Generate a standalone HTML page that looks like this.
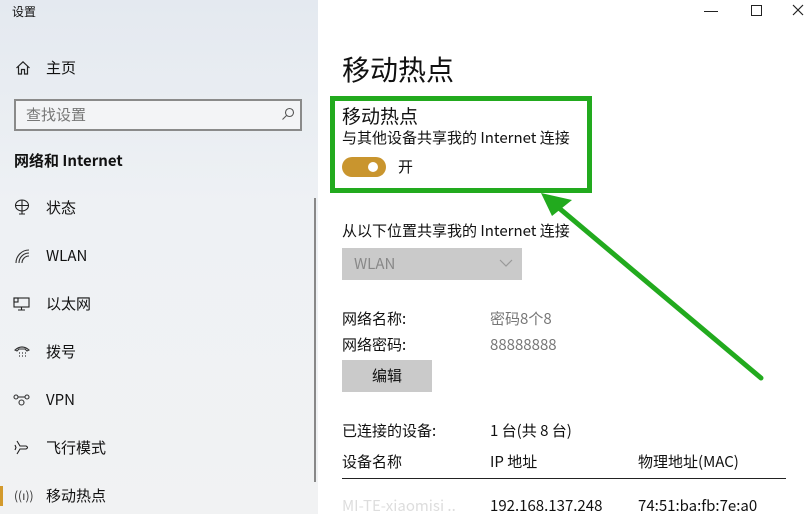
<!DOCTYPE html>
<html><head><meta charset="utf-8"><style>
*{margin:0;padding:0;box-sizing:border-box}
body{width:812px;height:514px;overflow:hidden;position:relative;background:#fff;font-family:"Noto Sans CJK SC","Liberation Sans",sans-serif;color:#111}
.side{position:absolute;left:0;top:0;width:318px;height:514px;background:linear-gradient(180deg,#e4e9f0 0%,#eef1f4 40%,#f1f2f3 100%)}
.t{position:absolute;white-space:nowrap;line-height:20px}
.nav{position:absolute;left:46px;font-size:15px;line-height:20px;white-space:nowrap}
</style></head><body>
<div class="side">
<div class="t" style="left:12px;top:2px;font-size:12px">设置</div>
<svg style="position:absolute;left:15px;top:60px" width="16" height="16" viewBox="0 0 16 16" fill="none" stroke="#222" stroke-width="1.2"><path d="M1.5 8 L8 1.8 L14.5 8 M3.5 6.5 V14 H6.5 V9.5 H9.5 V14 H12.5 V6.5"/></svg>
<div class="nav" style="top:58px">主页</div>
<div style="position:absolute;left:14px;top:99px;width:288px;height:32px;border:2px solid #8a8a8a;background:#f3f4f6"></div>
<div class="t" style="left:26px;top:105px;font-size:15px;color:#777">查找设置</div>
<svg style="position:absolute;left:281px;top:107px" width="14" height="14" viewBox="0 0 14 14" fill="none" stroke="#555" stroke-width="1.1"><circle cx="8.5" cy="5.5" r="4"/><path d="M5.5 8.5 L1.5 12.5"/></svg>
<div class="t" style="left:14px;top:151px;font-size:15px;font-weight:bold">网络和 Internet</div>
<svg style="position:absolute;left:14px;top:199px" width="16" height="16" viewBox="0 0 16 16" fill="none" stroke="#222" stroke-width="1.1"><ellipse cx="8" cy="6.5" rx="6.5" ry="5.5"/><path d="M1.5 6.5 H14.5 M8 1 V12 M5 15 H11 M8 12 V15"/></svg>
<div class="nav" style="top:198px">状态</div>
<svg style="position:absolute;left:14px;top:248px" width="16" height="16" viewBox="0 0 16 16" fill="none" stroke="#333" stroke-width="1.1"><path d="M2 15 A13 13 0 0 1 15 2 M5 15 A10 10 0 0 1 15 5 M8 15 A7 7 0 0 1 15 8"/></svg>
<div class="nav" style="top:246px">WLAN</div>
<svg style="position:absolute;left:13px;top:296px" width="17" height="16" viewBox="0 0 17 16" fill="none" stroke="#222" stroke-width="1.1"><rect x="1" y="2" width="15" height="9"/><path d="M8.5 11 V14 M5 14 H12"/><rect x="1" y="2" width="4" height="4"/></svg>
<div class="nav" style="top:294px">以太网</div>
<svg style="position:absolute;left:14px;top:344px" width="16" height="16" viewBox="0 0 16 16" fill="none" stroke="#333" stroke-width="1.1"><path d="M1 6 Q8 0 15 6 L13 7 L11 5 H5 L3 7 Z"/><path d="M5 9h1M8 9h1M11 9h1M5 12h1M8 12h1M11 12h1" stroke-width="1.3"/></svg>
<div class="nav" style="top:342px">拨号</div>
<svg style="position:absolute;left:13px;top:393px" width="17" height="14" viewBox="0 0 17 14" fill="none" stroke="#333" stroke-width="1.1"><circle cx="3" cy="4" r="2"/><circle cx="14" cy="4" r="2"/><circle cx="8.5" cy="9.5" r="2.5"/><path d="M5 4 H12"/></svg>
<div class="nav" style="top:390px">VPN</div>
<svg style="position:absolute;left:13px;top:439px" width="17" height="17" viewBox="0 0 17 17" fill="none" stroke="#222" stroke-width="1.1"><path d="M4 2 L7 7 H13 Q16 8.5 13 10 H7 L4 15 M2 6 L3 8.5 L2 11"/></svg>
<div class="nav" style="top:438px">飞行模式</div>
<div style="position:absolute;left:0;top:486px;width:3px;height:20px;background:#d39a2c"></div>
<div class="t" style="left:14px;top:486px;font-size:12px;color:#333">((ı))</div>
<div class="nav" style="top:486px">移动热点</div>
<div style="position:absolute;left:314px;top:198px;width:2px;height:284px;background:#888"></div>
</div>
<div style="position:absolute;left:704px;top:11px;width:14px;height:1px;background:#222"></div>
<div style="position:absolute;left:751px;top:5px;width:11px;height:11px;border:1.2px solid #222"></div>
<svg style="position:absolute;left:792px;top:4px" width="12" height="12" viewBox="0 0 12 12" stroke="#222" stroke-width="1.2"><path d="M1 1 L11 11 M11 1 L1 11"/></svg>
<div class="t" style="left:342px;top:52px;font-size:28px;line-height:34px">移动热点</div>
<div class="t" style="left:342px;top:105px;font-size:19px;line-height:22px">移动热点</div>
<div class="t" style="left:342px;top:128px;font-size:15px">与其他设备共享我的 Internet 连接</div>
<div style="position:absolute;left:342px;top:157px;width:44px;height:20px;border-radius:10px;background:#c9952e"></div>
<div style="position:absolute;left:368px;top:162px;width:10px;height:10px;border-radius:50%;background:#fff"></div>
<div class="t" style="left:398px;top:157px;font-size:15px">开</div>
<div style="position:absolute;left:330px;top:96px;width:262px;height:97px;border:5px solid #22aa1e"></div>
<div class="t" style="left:342px;top:221px;font-size:15px">从以下位置共享我的 Internet 连接</div>
<div style="position:absolute;left:342px;top:248px;width:180px;height:32px;background:#cacaca"></div>
<div class="t" style="left:354px;top:254px;font-size:15px;color:#888">WLAN</div>
<svg style="position:absolute;left:499px;top:259px" width="14" height="9" viewBox="0 0 14 9" fill="none" stroke="#999" stroke-width="1.2"><path d="M1 1 L7 7 L13 1"/></svg>
<div class="t" style="left:342px;top:309px;font-size:15px">网络名称:</div>
<div class="t" style="left:490px;top:309px;font-size:15px;color:#777">密码8个8</div>
<div class="t" style="left:342px;top:335px;font-size:15px">网络密码:</div>
<div class="t" style="left:490px;top:335px;font-size:15px;color:#777">88888888</div>
<div style="position:absolute;left:342px;top:360px;width:90px;height:32px;background:#cacaca"></div>
<div class="t" style="left:372px;top:366px;font-size:15px">编辑</div>
<div class="t" style="left:342px;top:421px;font-size:15px">已连接的设备:</div>
<div class="t" style="left:490px;top:421px;font-size:15px">1 台(共 8 台)</div>
<div class="t" style="left:342px;top:452px;font-size:15px">设备名称</div>
<div class="t" style="left:490px;top:452px;font-size:15px">IP 地址</div>
<div class="t" style="left:638px;top:452px;font-size:15px">物理地址(MAC)</div>
<div style="position:absolute;left:342px;top:478px;width:444px;height:1px;background:#222"></div>
<div class="t" style="left:342px;top:496px;font-size:15px;color:#ddd">MI-TE-xiaomisi ..</div>
<div class="t" style="left:490px;top:496px;font-size:15px">192.168.137.248</div>
<div class="t" style="left:638px;top:496px;font-size:15px">74:51:ba:fb:7e:a0</div>
<svg style="position:absolute;left:0;top:0" width="812" height="514"><path d="M761 378 L553 203" stroke="#22aa1e" stroke-width="5" stroke-linecap="round"/><path d="M541 193 L572 200 L552 216 Z" fill="#22aa1e"/></svg>
</body></html>
